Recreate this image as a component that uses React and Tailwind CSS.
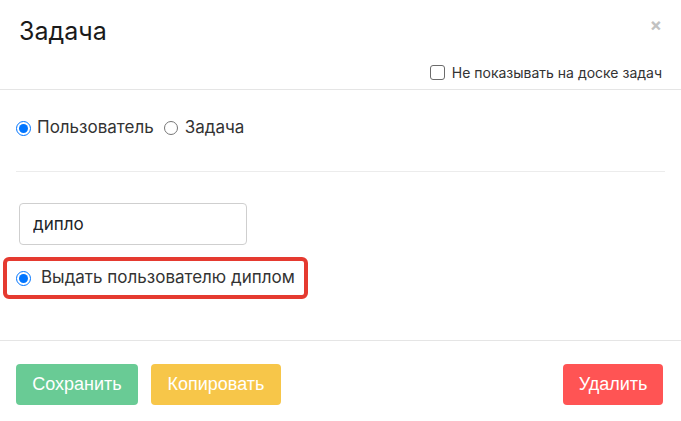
import React, { useState } from 'react';

export default function App() {
    const [target, setTarget] = useState('user');
    const [hidden, setHidden] = useState(false);
    const [query, setQuery] = useState('дипло');

    return (
        <div className="w-[681px] h-[421px] bg-white overflow-hidden text-[#212529]" style={{ fontFamily: 'Inter, "Noto Sans", sans-serif' }}>
            {/* шапка */}
            <div className="relative h-[90px] border-b border-[#e5e5e5] pt-[16px]">
                <h2 className="pl-[19px] text-[25px] leading-[30px] font-normal text-[#1a1a1a]">Задача</h2>
                <button type="button" className="absolute top-[15px] right-[19px] text-[18px] leading-[20px] font-bold text-[#c2c2c2]">×</button>
                <label className="mt-4 flex h-5 items-center justify-end gap-[7px] pr-[19px] text-[14px] text-[#333]">
                    <input
                        type="checkbox"
                        checked={hidden}
                        onChange={(e) => setHidden(e.target.checked)}
                        className="m-0 h-[15px] w-[15px] appearance-none rounded-[3px] border border-[#6b6b6b] bg-white"
                    />
                    Не показывать на доске задач
                </label>
            </div>

            {/* тело */}
            <div className="px-4">
                <div className="flex h-6 items-center mt-[26px] text-[17px] text-[#333]">
                    <label className="flex items-center gap-[6px]">
                        <input type="radio" name="target" checked={target === 'user'} onChange={() => setTarget('user')} className="m-0 h-[15px] w-[15px] accent-[#0075ff]" />
                        Пользователь
                    </label>
                    <label className="ml-[10px] flex items-center gap-[7px]">
                        <input type="radio" name="target" checked={target === 'task'} onChange={() => setTarget('task')} className="m-0 h-[14px] w-[14px] accent-[#0075ff]" />
                        Задача
                    </label>
                </div>

                <div className="mt-[31px] h-px bg-[#ececec]" />

                <input
                    type="text"
                    value={query}
                    onChange={(e) => setQuery(e.target.value)}
                    className="mt-[31px] ml-[3px] block h-[42px] w-[228px] rounded-[4px] border border-[#cfcfcf] pl-[13px] text-[17px] text-[#212529] outline-none"
                />

                <div className="mt-[12px] -ml-[13px] flex h-[42px] w-[305px] items-center rounded-[6px] border-4 border-[#e53a30] pl-[9px] text-[17px] text-[#333]">
                    <label className="flex items-center gap-[10px]">
                        <input type="radio" name="result" defaultChecked className="m-0 h-[15px] w-[15px] accent-[#0075ff]" />
                        Выдать пользователю диплом
                    </label>
                </div>
            </div>

            {/* футер */}
            <div className="mt-[41px] flex items-center border-t border-[#e5e5e5] px-4 pt-[23px]" style={{ fontFamily: '"Liberation Sans", Arial, sans-serif' }}>
                <button type="button" className="h-[41px] w-[122px] rounded-[4px] bg-[#69cb95] text-[18px] text-white">Сохранить</button>
                <button type="button" className="ml-[13px] h-[41px] w-[130px] rounded-[4px] bg-[#f7c649] text-[18px] text-white">Копировать</button>
                <button type="button" className="ml-auto mr-[2px] h-[41px] w-[100px] rounded-[4px] bg-[#ff5454] text-[18px] text-white">Удалить</button>
            </div>
        </div>
    );
}
